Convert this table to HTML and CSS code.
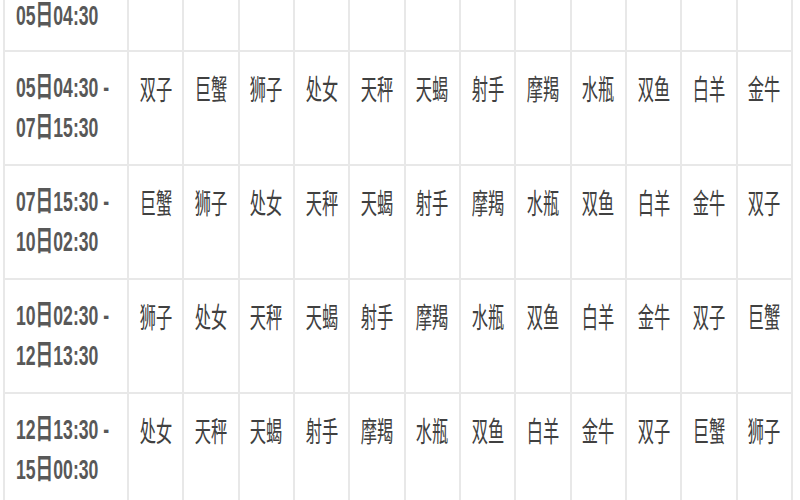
FILE: index.html
```html
<!DOCTYPE html>
<html lang="zh-CN">
<head>
<meta charset="utf-8">
<title>星座时间表</title>
<link rel="stylesheet" href="styles.css">
</head>
<body>
<div class="table">
  <div class="row row-partial">
    <div class="cell date"><span>05日04:30</span></div>
    <div class="cell"></div>
    <div class="cell"></div>
    <div class="cell"></div>
    <div class="cell"></div>
    <div class="cell"></div>
    <div class="cell"></div>
    <div class="cell"></div>
    <div class="cell"></div>
    <div class="cell"></div>
    <div class="cell"></div>
    <div class="cell"></div>
    <div class="cell"></div>
  </div>
  <div class="row">
    <div class="cell date"><span>05日04:30 -</span><span>07日15:30</span></div>
    <div class="cell"><span class="sign">双子</span></div>
    <div class="cell"><span class="sign">巨蟹</span></div>
    <div class="cell"><span class="sign">狮子</span></div>
    <div class="cell"><span class="sign">处女</span></div>
    <div class="cell"><span class="sign">天秤</span></div>
    <div class="cell"><span class="sign">天蝎</span></div>
    <div class="cell"><span class="sign">射手</span></div>
    <div class="cell"><span class="sign">摩羯</span></div>
    <div class="cell"><span class="sign">水瓶</span></div>
    <div class="cell"><span class="sign">双鱼</span></div>
    <div class="cell"><span class="sign">白羊</span></div>
    <div class="cell"><span class="sign">金牛</span></div>
  </div>
  <div class="row">
    <div class="cell date"><span>07日15:30 -</span><span>10日02:30</span></div>
    <div class="cell"><span class="sign">巨蟹</span></div>
    <div class="cell"><span class="sign">狮子</span></div>
    <div class="cell"><span class="sign">处女</span></div>
    <div class="cell"><span class="sign">天秤</span></div>
    <div class="cell"><span class="sign">天蝎</span></div>
    <div class="cell"><span class="sign">射手</span></div>
    <div class="cell"><span class="sign">摩羯</span></div>
    <div class="cell"><span class="sign">水瓶</span></div>
    <div class="cell"><span class="sign">双鱼</span></div>
    <div class="cell"><span class="sign">白羊</span></div>
    <div class="cell"><span class="sign">金牛</span></div>
    <div class="cell"><span class="sign">双子</span></div>
  </div>
  <div class="row">
    <div class="cell date"><span>10日02:30 -</span><span>12日13:30</span></div>
    <div class="cell"><span class="sign">狮子</span></div>
    <div class="cell"><span class="sign">处女</span></div>
    <div class="cell"><span class="sign">天秤</span></div>
    <div class="cell"><span class="sign">天蝎</span></div>
    <div class="cell"><span class="sign">射手</span></div>
    <div class="cell"><span class="sign">摩羯</span></div>
    <div class="cell"><span class="sign">水瓶</span></div>
    <div class="cell"><span class="sign">双鱼</span></div>
    <div class="cell"><span class="sign">白羊</span></div>
    <div class="cell"><span class="sign">金牛</span></div>
    <div class="cell"><span class="sign">双子</span></div>
    <div class="cell"><span class="sign">巨蟹</span></div>
  </div>
  <div class="row">
    <div class="cell date"><span>12日13:30 -</span><span>15日00:30</span></div>
    <div class="cell"><span class="sign">处女</span></div>
    <div class="cell"><span class="sign">天秤</span></div>
    <div class="cell"><span class="sign">天蝎</span></div>
    <div class="cell"><span class="sign">射手</span></div>
    <div class="cell"><span class="sign">摩羯</span></div>
    <div class="cell"><span class="sign">水瓶</span></div>
    <div class="cell"><span class="sign">双鱼</span></div>
    <div class="cell"><span class="sign">白羊</span></div>
    <div class="cell"><span class="sign">金牛</span></div>
    <div class="cell"><span class="sign">双子</span></div>
    <div class="cell"><span class="sign">巨蟹</span></div>
    <div class="cell"><span class="sign">狮子</span></div>
  </div>
</div>
</body>
</html>
```
FILE: styles.css
```css
html, body {
  margin: 0;
  padding: 0;
  background: #ffffff;
  overflow: hidden;
}

.table {
  margin: 0 0 0 3px;
  width: 788px;
  border-right: 2px solid #e8e8e8;
}

.row {
  display: grid;
  grid-template-columns: 124px repeat(12, minmax(0, 1fr));
  height: 114px;
}

.row-partial {
  height: 50px;
}

.cell {
  box-sizing: border-box;
  min-width: 0;
  border-left: 2px solid #e8e8e8;
  border-top: 2px solid #e8e8e8;
  padding-top: 16px;
  display: flex;
  justify-content: center;
  align-items: flex-start;
}

.row-partial .cell {
  border-top: none;
  padding-top: 0;
}

.date {
  flex-direction: column;
  justify-content: flex-start;
  align-items: flex-start;
  padding-left: 11px;
}

.date span {
  display: block;
  font-family: "Liberation Sans", "Noto Sans CJK SC", sans-serif;
  font-weight: bold;
  font-size: 28px;
  line-height: 40px;
  color: #585858;
  white-space: nowrap;
  transform: scaleX(0.63);
  transform-origin: left center;
}

.row-partial .date span {
  line-height: 32px;
}

.sign {
  flex: none;
  font-family: "Noto Sans CJK SC", sans-serif;
  font-size: 28px;
  line-height: 40px;
  color: #404040;
  white-space: nowrap;
  transform: scaleX(0.58);
}
```
